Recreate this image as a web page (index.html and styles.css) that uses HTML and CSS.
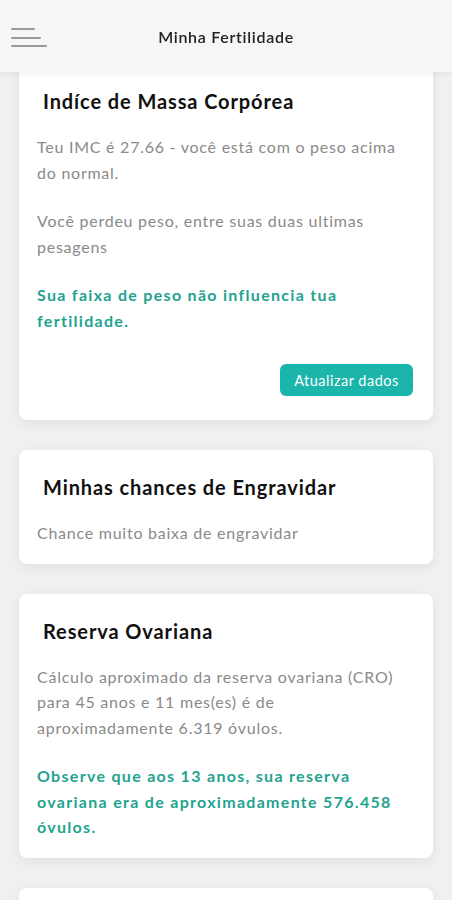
FILE: index.html
```html
<!DOCTYPE html>
<html lang="pt">
<head>
    <meta charset="UTF-8">
    <title>Minha Fertilidade</title>
    <link rel="stylesheet" href="styles.css">
</head>
<body>
<div class="header">
    <div class="menu">
        <span class="bar bar-s"></span>
        <span class="bar bar-m"></span>
        <span class="bar bar-l"></span>
    </div>
    <div class="title">Minha Fertilidade</div>
</div>
<div class="main">
    <div class="card">
        <div class="card-title">Indíce de Massa Corpórea</div>
        <p class="text">Teu IMC é 27.66 - você está com o peso acima do normal.</p>
        <p class="text">Você perdeu peso, entre suas duas ultimas pesagens</p>
        <p class="text green">Sua faixa de peso não influencia tua fertilidade.</p>
        <div class="actions">
            <button class="btn">Atualizar dados</button>
        </div>
    </div>
    <div class="card">
        <div class="card-title">Minhas chances de Engravidar</div>
        <p class="text">Chance muito baixa de engravidar</p>
    </div>
    <div class="card">
        <div class="card-title">Reserva Ovariana</div>
        <p class="text">Cálculo aproximado da reserva ovariana (CRO) para 45 anos e 11 mes(es) é de aproximadamente 6.319 óvulos.</p>
        <p class="text green">Observe que aos 13 anos, sua reserva ovariana era de aproximadamente 576.458 óvulos.</p>
    </div>
    <div class="card card-empty"></div>
</div>
</body>
</html>
```
FILE: styles.css
```css
* {
    margin: 0;
    padding: 0;
    box-sizing: border-box;
}

body {
    background: #eef0f1;
    font-family: "Lato", "Open Sans", sans-serif;
    overflow: hidden;
}

.header {
    position: fixed;
    left: 0;
    top: 0;
    z-index: 2;
    width: 100%;
    height: 72px;
    display: flex;
    align-items: center;
    justify-content: center;
    background: #f6f6f7;
    box-shadow: 0 2px 6px rgba(0, 0, 0, 0.06);
}

.header .title {
    font-size: 16px;
    font-weight: 600;
    letter-spacing: 0.7px;
    color: #222;
}

.menu {
    position: absolute;
    left: 11px;
    top: 28px;
    display: flex;
    flex-direction: column;
    gap: 6.5px;
}

.menu .bar {
    display: block;
    height: 2px;
    border-radius: 1px;
    background: #9a9a9a;
}

.bar-s {
    width: 24px;
}

.bar-m {
    width: 30px;
}

.bar-l {
    width: 36px;
}

.main {
    padding: 64px 19px 0 19px;
    display: flex;
    flex-direction: column;
    gap: 30px;
}

.card {
    background: #ffffff;
    border-radius: 8px;
    padding: 24px 20px 18px 18px;
    box-shadow: 0 3px 12px rgba(0, 0, 0, 0.07);
}

.card-empty {
    height: 80px;
}

.card-title {
    margin-left: 6px;
    font-size: 20px;
    line-height: 26px;
    font-weight: 700;
    letter-spacing: 0.9px;
    color: #111;
    margin-bottom: 20px;
}

.text {
    font-size: 16px;
    line-height: 25.5px;
    letter-spacing: 0.75px;
    color: #8a8a8a;
}

.text + .text {
    margin-top: 23px;
}

.green {
    color: #1fa38f;
    font-weight: 700;
    letter-spacing: 1.3px;
}

.actions {
    display: flex;
    justify-content: flex-end;
    margin-top: 31px;
    margin-bottom: 6px;
}

.btn {
    border: none;
    background: #1bb5ab;
    color: #ffffff;
    font-family: inherit;
    font-size: 14.5px;
    letter-spacing: 0.5px;
    width: 133px;
    height: 32px;
    border-radius: 6px;
}
```
